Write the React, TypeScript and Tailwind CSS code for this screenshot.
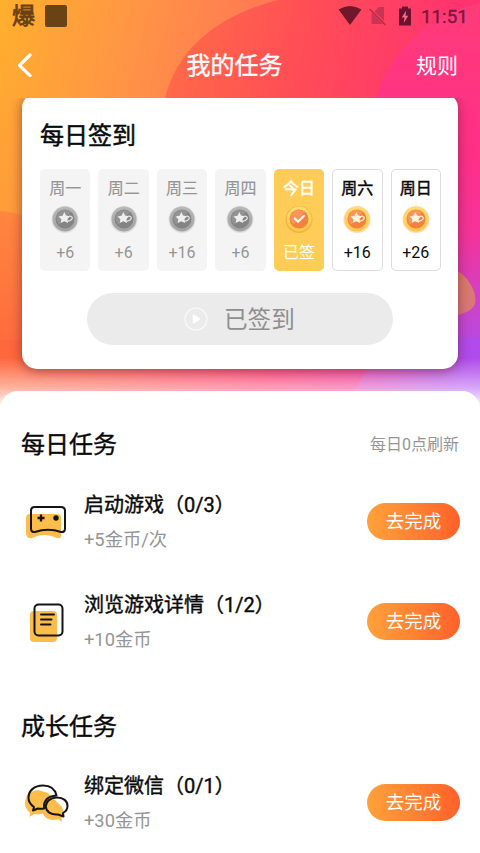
import React from "react";

const days = [
  { day: "周一", value: "+6", state: "past" },
  { day: "周二", value: "+6", state: "past" },
  { day: "周三", value: "+16", state: "past" },
  { day: "周四", value: "+6", state: "past" },
  { day: "今日", value: "已签", state: "today" },
  { day: "周六", value: "+16", state: "next" },
  { day: "周日", value: "+26", state: "next" },
];

const tileStyles: Record<string, string> = {
  past: "bg-[#f4f4f4] text-[#959595]",
  today: "bg-[#ffcd57] text-white",
  next: "bg-white text-[#0a0a0a] shadow-[inset_0_0_0_1px_#dcdcdc]",
};

function Backdrop() {
  return (
    <svg className="absolute left-0 top-0 h-[430px] w-[480px]" viewBox="0 0 480 430" aria-hidden="true">
      <defs>
        <linearGradient id="base" gradientUnits="userSpaceOnUse" x1="0" y1="0" x2="260" y2="70">
          <stop offset="0" stopColor="#ffaf2e" />
          <stop offset="0.5" stopColor="#ff9545" />
          <stop offset="1" stopColor="#ff7656" />
        </linearGradient>
        <linearGradient id="red" gradientUnits="userSpaceOnUse" x1="170" y1="60" x2="430" y2="130">
          <stop offset="0" stopColor="#ff6a48" />
          <stop offset="0.45" stopColor="#ff4e56" />
          <stop offset="1" stopColor="#ff3370" />
        </linearGradient>
        <linearGradient id="pink" gradientUnits="userSpaceOnUse" x1="460" y1="0" x2="460" y2="390">
          <stop offset="0" stopColor="#ff3c78" />
          <stop offset="0.4" stopColor="#ff2f88" />
          <stop offset="0.6" stopColor="#f5339a" />
          <stop offset="0.8" stopColor="#c845cd" />
          <stop offset="0.92" stopColor="#ae4bed" />
          <stop offset="1" stopColor="#b557f5" />
        </linearGradient>
        <linearGradient id="left" gradientUnits="userSpaceOnUse" x1="0" y1="210" x2="0" y2="390">
          <stop offset="0" stopColor="#ff873f" />
          <stop offset="1" stopColor="#ff613e" />
        </linearGradient>
        <linearGradient id="lower" gradientUnits="userSpaceOnUse" x1="0" y1="0" x2="480" y2="0">
          <stop offset="0" stopColor="#ff693d" />
          <stop offset="0.3" stopColor="#ff5456" />
          <stop offset="0.55" stopColor="#ff3a70" />
          <stop offset="0.78" stopColor="#f23295" />
        </linearGradient>
        <linearGradient id="purple" gradientUnits="userSpaceOnUse" x1="350" y1="0" x2="480" y2="0">
          <stop offset="0" stopColor="#e43fae" />
          <stop offset="0.6" stopColor="#bd4bdd" />
          <stop offset="1" stopColor="#ac51f5" />
        </linearGradient>
        <linearGradient id="petal" x1="0" y1="0" x2="0" y2="1">
          <stop offset="0" stopColor="#dd7a68" />
          <stop offset="1" stopColor="#d9787c" />
        </linearGradient>
        <linearGradient id="fade" x1="0" y1="0" x2="0" y2="1">
          <stop offset="0" stopColor="#fff" stopOpacity="0" />
          <stop offset="0.6" stopColor="#fff" stopOpacity="0.5" />
          <stop offset="1" stopColor="#fff" stopOpacity="1" />
        </linearGradient>
        <linearGradient id="leftTint" x1="0" y1="0" x2="0" y2="1">
          <stop offset="0" stopColor="#ff8f40" stopOpacity="0" />
          <stop offset="1" stopColor="#ff8f40" stopOpacity="0.4" />
        </linearGradient>
      </defs>
      <rect width="480" height="430" fill="url(#base)" />
      <rect y="60" width="30" height="160" fill="url(#leftTint)" />
      <path d="M0 211Q13 212 30 217V430H0Z" fill="url(#left)" />
      <path d="M278 0C225 14 179 43 165 98V340H480V0Z" fill="url(#red)" />
      <path d="M480 3C432 15 389 49 376 98V340H480Z" fill="url(#pink)" />
      <path d="M22 340H480V430H0V368Z" fill="url(#lower)" />
      <path d="M0 340H24V380H0Z" fill="#ff673d" />
      <path d="M440 340H480V430H340Q353 382 379 354Z" fill="url(#purple)" />
      <rect x="456" y="338" width="24" height="40" fill="#b04bec" />
      <path d="M456 270C468 277 477 291 475 303C474 309 465 314 456 315Z" fill="url(#petal)" />
      <rect y="358" width="480" height="50" fill="url(#fade)" />
    </svg>
  );
}

function StatusBar() {
  return (
    <div className="flex h-8 items-center pl-[12px] pr-[12px]">
      <span className="w-[24px] pt-[2px] text-[23px] leading-8 text-[#6b4012] [-webkit-text-stroke:0.8px]">爆</span>
      <span className="ml-[9px] size-[22px] rounded-[2px] bg-[#6a4315]" />
      <svg className="ml-auto h-8 w-[80px]" viewBox="0 0 80 32" aria-hidden="true">
        <path d="M0.5 9.5Q12 2.5 23.5 9.5L12 25Z" fill="#70182a" />
        <g opacity=".48">
          <path d="M37 11L41 7H46V24H33.500V14Z" fill="#8d2843" />
          <path d="M32 9L48 25" stroke="#ff405d" strokeWidth="3" />
          <path d="M31.500 9L47.500 25" stroke="#70182a" strokeWidth="1.700" />
        </g>
        <path d="M61 8.500H64V6.500H70V8.500H73V25.500H61Z" fill="#6a1230" />
        <path d="M68.200 10.500L63.800 17.500H66.500L65.800 23L70.200 15.800H67.500Z" fill="#ff6b87" />
      </svg>
      <span className="ml-[3px] w-[47px] whitespace-nowrap pt-[2px] text-[18.800px] leading-8 text-[#78183c] [-webkit-text-stroke:0.35px]">11:51</span>
    </div>
  );
}

function NavBar() {
  return (
    <div className="grid h-[66px] grid-cols-[1fr_auto_1fr] items-center pl-[17px] pr-[22px] text-white">
      <svg className="h-6 w-[15px]" viewBox="0 0 15 24" fill="none" stroke="currentColor" strokeWidth="3.200" strokeLinecap="round" strokeLinejoin="round" aria-hidden="true">
        <path d="M13 2L2.500 12.300L13 22.600" />
      </svg>
      <h1 className="mr-[6px] pt-[2px] text-[24px] leading-8 [-webkit-text-stroke:0.35px]">我的任务</h1>
      <span className="justify-self-end pt-[2px] text-[21px] leading-8">规则</span>
    </div>
  );
}

function Coin({ state }: { state: string }) {
  const gray = state === "past";
  const today = state === "today";
  return (
    <svg className="h-[30px] w-[30px]" viewBox="0 0 30 30" aria-hidden="true">
      <defs>
        <linearGradient id="goldRim" x1="0" y1="0" x2="0" y2="1">
          <stop offset="0" stopColor="#ffde70" />
          <stop offset="1" stopColor="#ffc843" />
        </linearGradient>
        <linearGradient id="grayRim" x1="0" y1="0" x2="0" y2="1">
          <stop offset="0" stopColor="#b9b9b9" />
          <stop offset="1" stopColor="#a2a2a2" />
        </linearGradient>
      </defs>
      <circle cx="15" cy="15.500" r="13.500" fill={gray ? "#c9c9c9" : today ? "#e8922e" : "#ffae78"} opacity=".5" />
      <circle cx="15" cy="15" r="12.500" fill={gray ? "url(#grayRim)" : "url(#goldRim)"} />
      <circle cx="15" cy="15" r="9.500" fill={gray ? "#848484" : "#f3823f"} />
      <path d="M6.500 13.500Q8 7 14 5.800Q18 5.800 21 8L9.500 20.500Q6.500 18 6.500 13.500Z" fill={gray ? "#9a9a9a" : "#fb9d68"} opacity=".7" />
      {today ? (
        <path d="M10.800 14.500L14 17.700L20 11.800" fill="none" stroke="#fff7ed" strokeWidth="2.200" strokeLinecap="round" />
      ) : (
        <g>
          <path d="M14.300 8L16 11.500L20 12.200L17.500 15L18 19L14.300 17.200L10.700 19L11.400 15.200L8.500 12.500L12.600 11.700Z" fill={gray ? "#efefef" : "#fff3da"} />
          <path d="M19 12.200C24 12 23.300 16.200 17 17.500" fill="none" stroke={gray ? "#dedede" : "#ffe9c4"} strokeWidth="1.300" />
        </g>
      )}
    </svg>
  );
}

function DayTile({ day, value, state }: { day: string; value: string; state: string }) {
  return (
    <div className={`flex flex-1 flex-col items-center rounded-[5px] pt-[8px] ${tileStyles[state]}`}>
      <span className={`text-[16px] leading-6 ${state === "past" ? "[-webkit-text-stroke:0.15px]" : "[-webkit-text-stroke:0.45px]"}`}>{day}</span>
      <div className="mt-[3px]"><Coin state={state} /></div>
      <span className="mt-[7px] text-[16px] leading-6">{value}</span>
    </div>
  );
}

function CheckInCard() {
  return (
    <section className="mx-[22px] -mt-[5px] h-[276px] rounded-[15px] bg-white px-[18px] pt-[27px] shadow-[0_2px_12px_rgba(90,30,40,0.55)]">
      <h2 className="text-[24px] leading-8 text-[#0a0a0a] [-webkit-text-stroke:0.5px]">每日签到</h2>
      <div className="mt-[17px] flex h-[102px] w-[401px] gap-[8px]">
        {days.map((d) => (
          <DayTile key={d.day} {...d} />
        ))}
      </div>
      <button className="ml-[47px] mt-[22px] flex h-[52px] w-[306px] items-center rounded-full bg-[#ebebeb] pl-[97px] text-[24px] text-[#8f8f8f]">
        <svg className="size-6" viewBox="0 0 24 24" aria-hidden="true">
          <circle cx="12" cy="12" r="11" fill="none" stroke="#fafafa" strokeWidth="1.200" />
          <path d="M9.500 8L15.500 12L9.500 16Z" fill="#fff" stroke="#fff" strokeWidth="1.500" strokeLinejoin="round" />
        </svg>
        <span className="ml-[16px] pt-[2px] text-[23.600px] leading-8">已签到</span>
      </button>
    </section>
  );
}

function GameIcon() {
  return (
    <svg className="h-[36px] w-[44px]" viewBox="0 0 44 36" aria-hidden="true">
      <path d="M4 10H33Q37 10 37 14V30Q38 35 33 34Q20 28 8 34Q2 35 2 29V14Q2 10 6 10Z" fill="#fdbd4b" />
      <path d="M10.500 3H37Q41 3 41 7V24.500Q41 28.500 37 28Q24 23.500 11 28Q7 28.500 7 24.500V7Q7 3 10.500 3Z" fill="none" stroke="#151515" strokeWidth="2" />
      <path d="M13.500 14H20.500M17 10.500V17.500" stroke="#151515" strokeWidth="2.300" />
      <circle cx="32" cy="14" r="2.700" fill="#151515" />
    </svg>
  );
}

function NoteIcon() {
  return (
    <svg className="h-[42px] w-[44px]" viewBox="0 0 44 42" aria-hidden="true">
      <rect x="6" y="10" width="27" height="31" rx="4" fill="#fdbd4b" />
      <rect x="10.500" y="3.500" width="28" height="31" rx="4" fill="none" stroke="#151515" strokeWidth="2" />
      <path d="M17 13.500H30M17 18.500H27.500M17 23.500H26.500" stroke="#151515" strokeWidth="2" strokeLinecap="round" />
    </svg>
  );
}

function ChatIcon() {
  return (
    <svg className="h-[42px] w-[46px]" viewBox="0 0 46 42" aria-hidden="true">
      <path d="M14 8C6 9 1 14 1 21Q1 27 6 30.500L5.500 35L10 32Q14 33 19 31.500Q21 37 28 38L34.500 37.500L38 40L37.500 36Q41 33 38 25L24 11Z" fill="#fdbd4b" />
      <g fill="none" stroke="#151515" strokeWidth="2" strokeLinejoin="round">
        <path d="M32.500 13.500C31 7 26 3.500 19 3.500C10.500 3.500 4.500 8.500 4.500 15.500Q4.500 21.500 10 25L9 28.500L14 26.500Q17 27 20 26.500Q19 14.500 32.500 13.500Z" />
        <path d="M33 15.500C26.500 15.500 21.800 19.500 21.800 24.300C21.800 29.500 27 33.300 34 32.500L39.500 34.500L39 31Q43.500 28.500 43.500 24C43.500 19 39.500 15.500 33 15.500Z" />
      </g>
    </svg>
  );
}

function TaskRow({ icon, title, reward }: { icon: React.ReactNode; title: string; reward: string }) {
  return (
    <div className="flex h-[64px] items-center pl-[24px] pr-[20px]">
      <div className="flex w-[46px] justify-start pt-[2px]">{icon}</div>
      <div className="ml-[14px] flex h-[66px] flex-col justify-between pt-[3px]">
        <h3 className="whitespace-nowrap text-[20px] leading-[28px] text-[#0a0a0a] [-webkit-text-stroke:0.4px]">{title}</h3>
        <p className="text-[18.300px] leading-7 text-[#959595]">{reward}</p>
      </div>
      <button className="ml-auto h-[37px] w-[93px] rounded-full bg-linear-to-r from-[#ffa13b] to-[#ff6029] pt-px text-[18.500px] leading-[37px] text-white">去完成</button>
    </div>
  );
}

export default function App() {
  return (
    <main className="relative flex h-[853px] w-[480px] flex-col overflow-hidden bg-white font-['Roboto','Noto_Sans_CJK_SC',sans-serif]">
      <Backdrop />
      <header className="relative">
        <StatusBar />
        <NavBar />
      </header>
      <div className="relative h-[293px] shrink-0 overflow-hidden">
        <CheckInCard />
      </div>
      <div className="relative flex-1 rounded-t-[18px] bg-white pt-[38px]">
        <div className="flex items-center justify-between pl-[21px] pr-[21px]">
          <h2 className="text-[24px] leading-8 text-[#0a0a0a] [-webkit-text-stroke:0.4px]">每日任务</h2>
          <span className="text-[16px] leading-8 text-[#959595]">每日0点刷新</span>
        </div>
        <div className="mt-[28px] flex flex-col gap-[36px]">
          <TaskRow icon={<GameIcon />} title="启动游戏（0/3）" reward="+5金币/次" />
          <TaskRow icon={<NoteIcon />} title="浏览游戏详情（1/2）" reward="+10金币" />
        </div>
        <h2 className="mt-[58px] pl-[21px] text-[24px] leading-8 text-[#0a0a0a] [-webkit-text-stroke:0.4px]">成长任务</h2>
        <div className="mt-[27px]">
          <TaskRow icon={<ChatIcon />} title="绑定微信（0/1）" reward="+30金币" />
        </div>
      </div>
    </main>
  );
}
